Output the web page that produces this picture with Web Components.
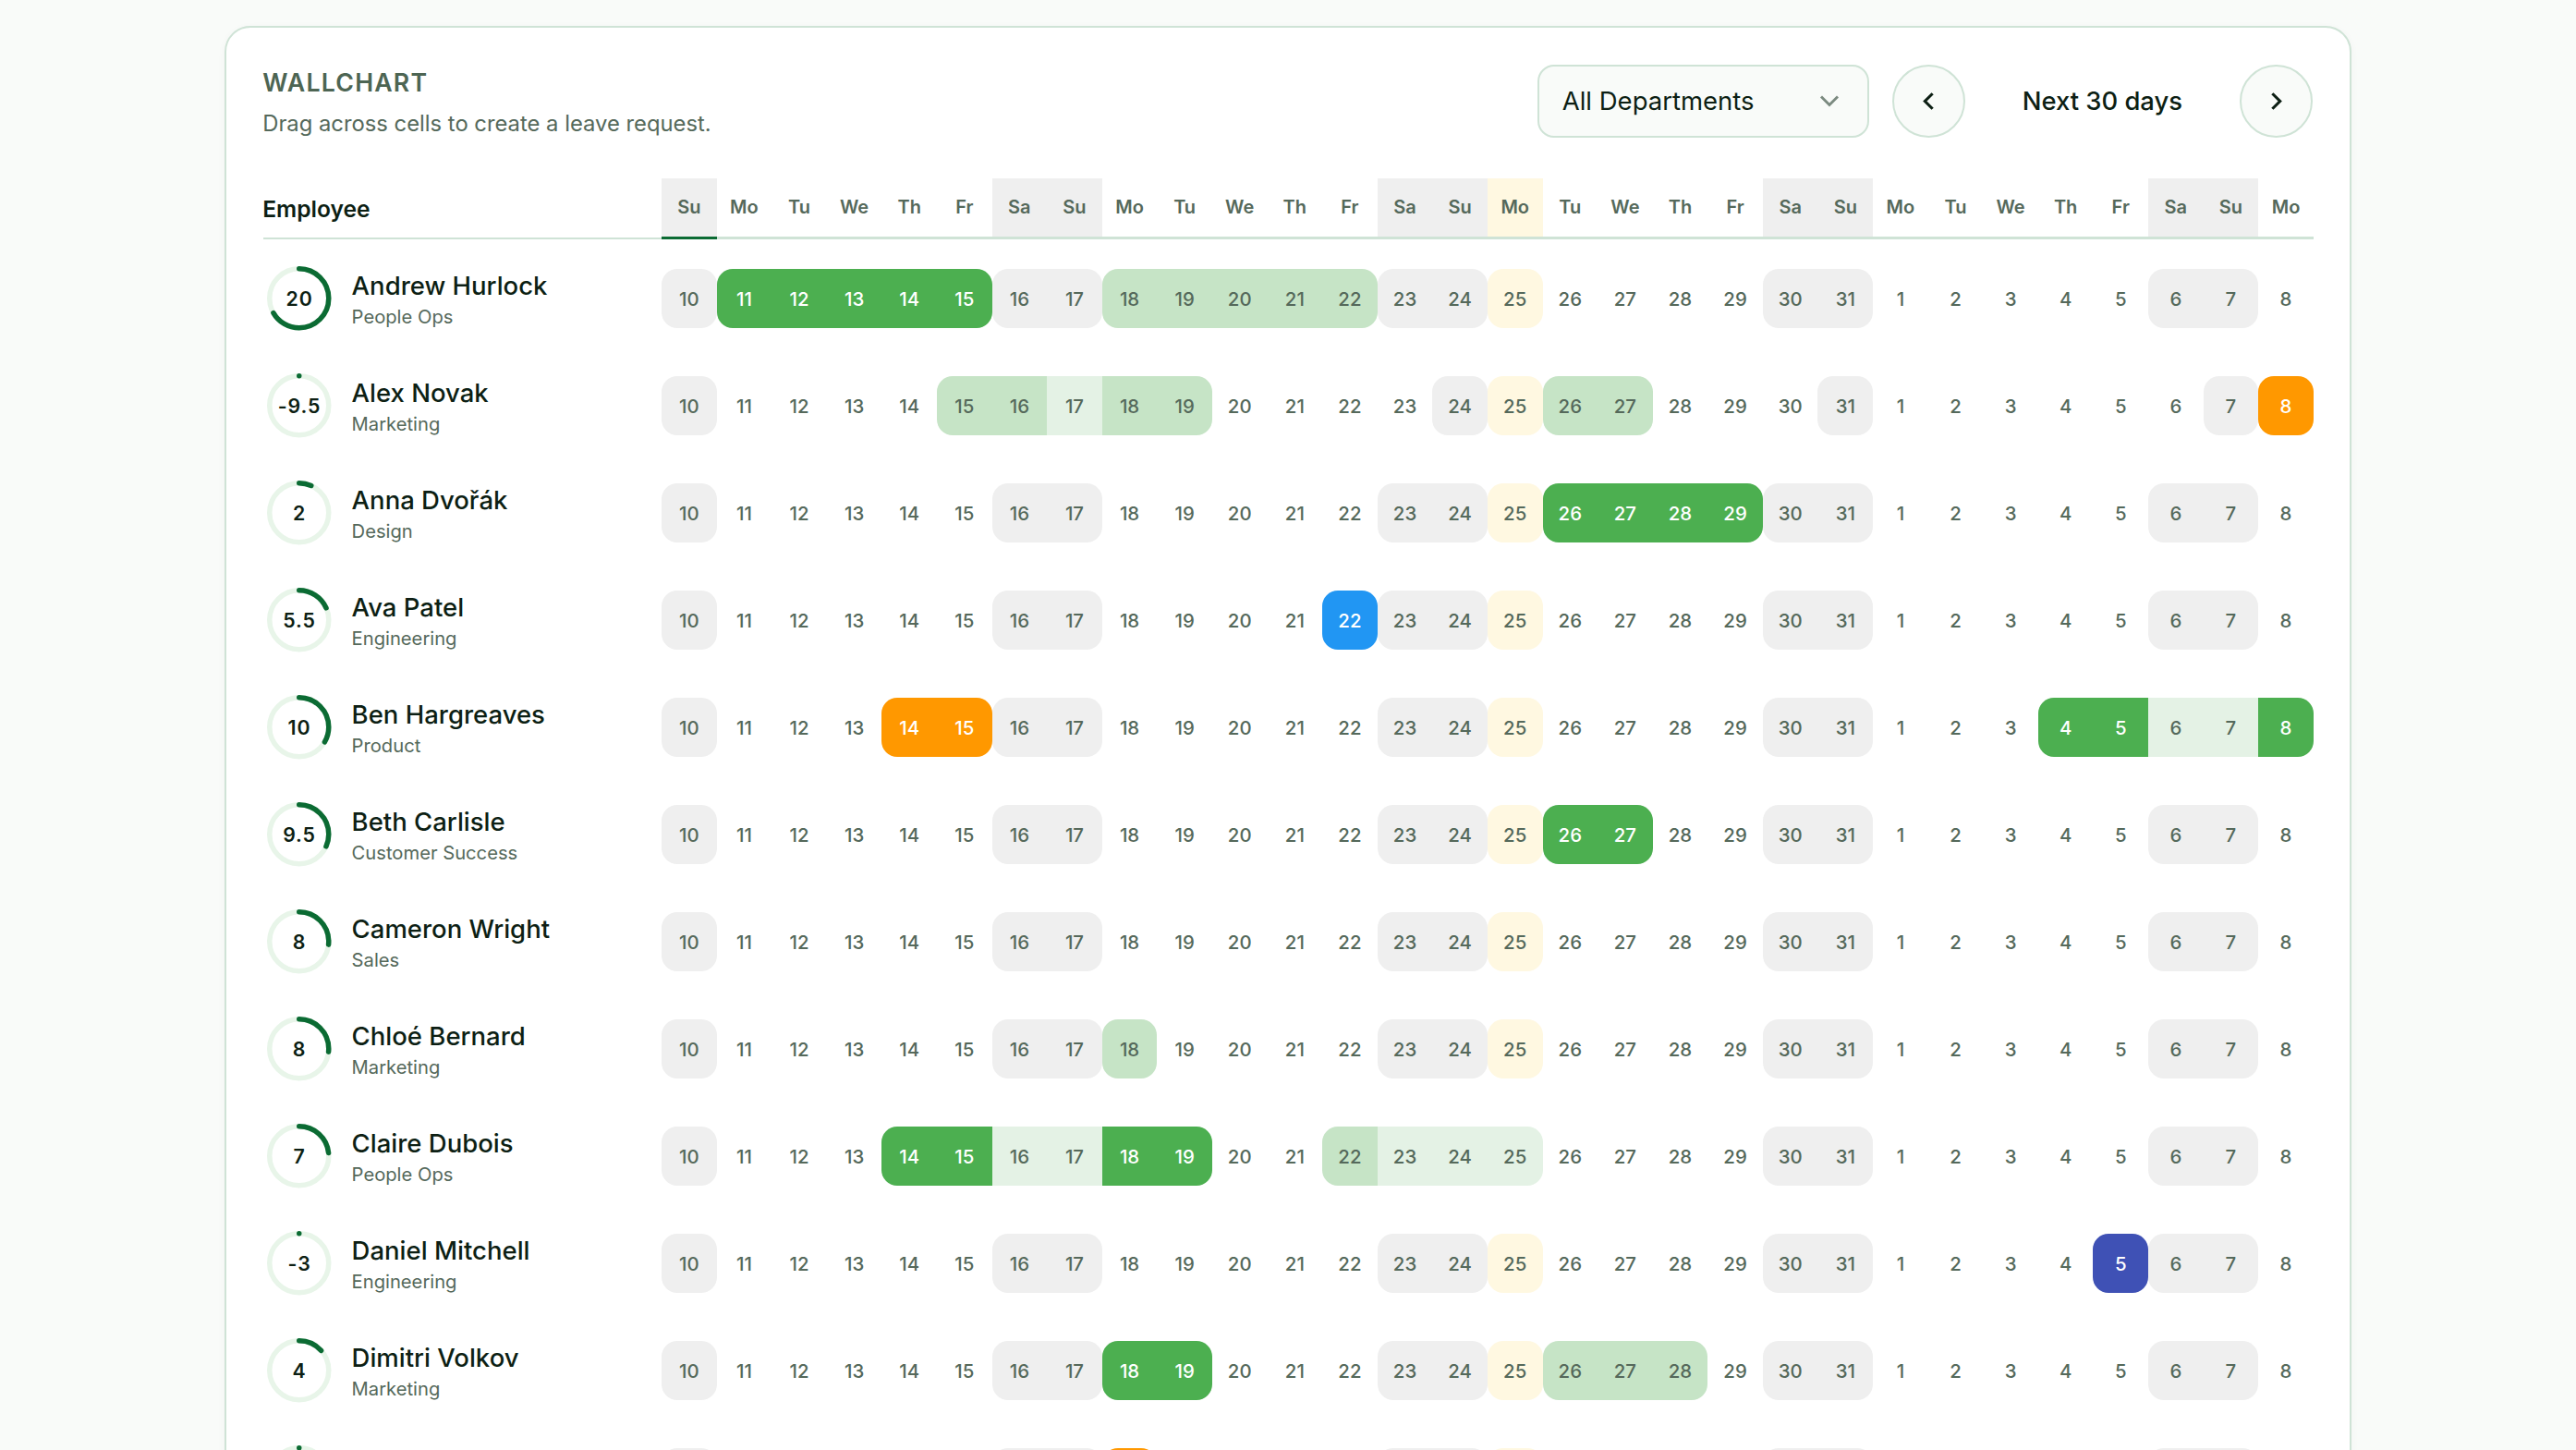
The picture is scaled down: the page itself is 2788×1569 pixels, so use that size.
<!DOCTYPE html>
<html lang="en">
<head>
<meta charset="utf-8">
<title>Wallchart</title>
<style>
  html, body { margin: 0; height: 1569px; overflow: hidden; background: #f9fbf9; }
  body { padding-top: 27.5px; box-sizing: border-box; font-family: Inter, "Noto Sans", sans-serif; color: #0d1f14; }
</style>
</head>
<body>
<wc-card title="WALLCHART" subtitle="Drag across cells to create a leave request.">
  <wc-select slot="controls" label="All Departments"></wc-select>
  <wc-range slot="controls" label="Next 30 days"></wc-range>
  <wc-head></wc-head>
  <wc-row name="Andrew Hurlock" dept="People Ops" balance="20" leaves="1-5:s 8-12:l"></wc-row>
  <wc-row name="Alex Novak" dept="Marketing" balance="-9.5" off="0 14 21 28" leaves="5-6:l,7:p,8-9:l 16-17:l 29:o"></wc-row>
  <wc-row name="Anna Dvořák" dept="Design" balance="2" leaves="16-19:s"></wc-row>
  <wc-row name="Ava Patel" dept="Engineering" balance="5.5" leaves="12:b"></wc-row>
  <wc-row name="Ben Hargreaves" dept="Product" balance="10" leaves="4-5:o 25-26:s,27-28:p,29:s"></wc-row>
  <wc-row name="Beth Carlisle" dept="Customer Success" balance="9.5" leaves="16-17:s"></wc-row>
  <wc-row name="Cameron Wright" dept="Sales" balance="8"></wc-row>
  <wc-row name="Chloé Bernard" dept="Marketing" balance="8" leaves="8:l"></wc-row>
  <wc-row name="Claire Dubois" dept="People Ops" balance="7" leaves="4-5:s,6-7:p,8-9:s 12:l,13-15:p"></wc-row>
  <wc-row name="Daniel Mitchell" dept="Engineering" balance="-3" leaves="26:i"></wc-row>
  <wc-row name="Dimitri Volkov" dept="Marketing" balance="4" leaves="8-9:s 16-18:l"></wc-row>
  <!-- only the top edge of this row is in frame, so it carries no text -->
  <wc-row balance="-1" leaves="8:o"></wc-row>
</wc-card>

<script>
const DAY_NAMES = ["Su", "Mo", "Tu", "We", "Th", "Fr", "Sa"];
const DAY_COUNT = 30;
const FIRST_DAY = 10;
const MONTH_LEN = 31;
const WEEKEND_COLS = [0, 6, 7, 13, 14, 20, 21, 27, 28];
const HOLIDAY_COL = 15;

const gridCols = `grid-template-columns: 431px repeat(${DAY_COUNT}, 59.6px);`;

// turn a list of column numbers into runs of neighbours
const toRuns = cols => {
  const runs = [];
  cols.forEach(c => {
    const last = runs[runs.length - 1];
    if (last && last[last.length - 1] === c - 1) last.push(c);
    else runs.push([c]);
  });
  return runs;
};

class WcCard extends HTMLElement {
  constructor() {
    super();
    this.attachShadow({ mode: "open" }).innerHTML = `
      <style>
        :host {
          display: block;
          box-sizing: border-box;
          width: 2302px;
          margin: 0 auto;
          padding: 40px 40px 0;
          background: #fff;
          border: 2px solid #cfe3d6;
          border-radius: 28px;
          box-shadow: 0 2px 8px rgba(20, 60, 30, 0.04);
        }
        header { display: flex; justify-content: space-between; align-items: flex-start; height: 79.4px; margin-bottom: 44px; }
        .intro { margin-left: -0.8px; }
        h1 { margin: 3.5px 0 0; font-size: 26.7px; line-height: 32px; font-weight: 600; letter-spacing: 1.2px; color: #4d6553; }
        p { margin: 13.5px 0 0; font-size: 23.8px; line-height: 30px; color: #55695b; }
        .controls { display: flex; align-items: center; gap: 24.5px; }
      </style>
      <header>
        <div class="intro">
          <h1>${this.getAttribute("title")}</h1>
          <p>${this.getAttribute("subtitle")}</p>
        </div>
        <div class="controls"><slot name="controls"></slot></div>
      </header>
      <slot></slot>
    `;
    this.removeAttribute("title");
  }
}

class WcSelect extends HTMLElement {
  constructor() {
    super();
    this.attachShadow({ mode: "open" }).innerHTML = `
      <style>
        :host {
          display: flex;
          align-items: center;
          justify-content: space-between;
          box-sizing: border-box;
          width: 359.5px;
          height: 79.4px;
          padding: 0 23px 0 25px;
          background: #f9fbf9;
          border: 2px solid #cfe3d6;
          border-radius: 18px;
          font-size: 27.5px;
          color: #0d1f14;
        }
        svg { display: block; width: 36px; height: 36px; fill: none; stroke: #7b8a80; stroke-width: 1.9; }
      </style>
      <span>${this.getAttribute("label")}</span>
      <svg viewBox="0 0 24 24"><polyline points="6 9 12 15 18 9"></polyline></svg>
    `;
  }
}

class WcRange extends HTMLElement {
  constructor() {
    super();
    this.attachShadow({ mode: "open" }).innerHTML = `
      <style>
        :host { display: flex; align-items: center; }
        button {
          display: flex;
          align-items: center;
          justify-content: center;
          box-sizing: border-box;
          width: 79.4px;
          height: 79.4px;
          padding: 0;
          background: #f9fbf9;
          border: 2px solid #cfe3d6;
          border-radius: 50%;
        }
        svg { display: block; width: 33px; height: 33px; fill: none; stroke: #0d1f14; stroke-width: 2.3; }
        span { width: 296.5px; text-align: center; font-size: 27.4px; font-weight: 500; color: #0d1f14; }
      </style>
      <button aria-label="Previous"><svg viewBox="0 0 24 24"><polyline points="15 18 9 12 15 6"></polyline></svg></button>
      <span>${this.getAttribute("label")}</span>
      <button aria-label="Next"><svg viewBox="0 0 24 24"><polyline points="9 18 15 12 9 6"></polyline></svg></button>
    `;
  }
}

class WcHead extends HTMLElement {
  constructor() {
    super();
    const days = Array.from({ length: DAY_COUNT }, (_, i) => {
      let cls = "";
      if (WEEKEND_COLS.includes(i)) cls = "off";
      if (i === HOLIDAY_COL) cls = "holiday";
      if (i === 0) cls += " today";
      return `<div class="day ${cls}">${DAY_NAMES[i % 7]}</div>`;
    }).join("");
    this.attachShadow({ mode: "open" }).innerHTML = `
      <style>
        :host { display: grid; ${gridCols} height: 66px; margin-bottom: 6.3px; }
        .who {
          display: flex;
          align-items: flex-end;
          box-sizing: border-box;
          padding-bottom: 16px;
          border-bottom: 2px solid #cfe3d6;
          height: 66px;
          font-size: 24.6px;
          line-height: 30px;
          font-weight: 600;
          color: #0d1f14;
          text-indent: -0.8px;
        }
        .day {
          display: flex;
          align-items: center;
          justify-content: center;
          border-bottom: 3.6px solid #cfe3d6;
          font-size: 20px;
          font-weight: 600;
          color: #55695b;
        }
        .off { background: #efefef; }
        .holiday { background: #fff8e1; }
        .today { border-bottom-color: #0b6b33; }
      </style>
      <div class="who">Employee</div>
      ${days}
    `;
  }
}

class WcRing extends HTMLElement {
  constructor() {
    super();
    const value = parseFloat(this.getAttribute("value"));
    const r = 32;
    const full = 2 * Math.PI * r;
    const dash = value > 0 ? (value / 30) * full : 0;
    this.attachShadow({ mode: "open" }).innerHTML = `
      <style>
        :host { display: block; position: relative; width: 69.5px; height: 69.5px; }
        svg { display: block; width: 69.5px; height: 69.5px; fill: none; stroke-width: 5.5; }
        .track { stroke: #e8f5e9; }
        .bar { stroke: #0b6b33; stroke-linecap: round; }
        span {
          position: absolute;
          inset: 0;
          display: flex;
          align-items: center;
          justify-content: center;
          font-size: 21.3px;
          font-weight: 600;
          letter-spacing: 0.9px;
          color: #0d1f14;
        }
      </style>
      <svg viewBox="0 0 69.5 69.5">
        <circle class="track" cx="34.75" cy="34.75" r="${r}"></circle>
        <circle class="bar" cx="34.75" cy="34.75" r="${r}" stroke-dasharray="${dash} ${full + 10}" transform="rotate(-90 34.75 34.75)"></circle>
      </svg>
      <span><slot></slot></span>
    `;
  }
}

class WcRow extends HTMLElement {
  constructor() {
    super();
    const off = this.hasAttribute("off") ? this.getAttribute("off").split(" ").map(Number) : WEEKEND_COLS;
    const fills = {};
    const corners = {};
    const mark = (cols, fill) => {
      cols.forEach(c => { fills[c] = fill; corners[c] = ""; });
    };
    const roundEnds = cols => {
      corners[cols[0]] += " first";
      corners[cols[cols.length - 1]] += " last";
    };
    // background days first, leave is painted over them
    toRuns(off).forEach(run => mark(run, "off"));
    mark([HOLIDAY_COL], "holiday");
    toRuns(off).forEach(roundEnds);
    roundEnds([HOLIDAY_COL]);
    (this.getAttribute("leaves") || "").split(" ").filter(Boolean).forEach(run => {
      const all = [];
      run.split(",").forEach(part => {
        const [range, fill] = part.split(":");
        const [from, to = from] = range.split("-").map(Number);
        const cols = [];
        for (let c = from; c <= to; c++) cols.push(c);
        mark(cols, fill);
        all.push(...cols);
      });
      roundEnds(all);
    });
    const balance = this.getAttribute("balance");
    const name = this.getAttribute("name");
    const cells = Array.from({ length: DAY_COUNT }, (_, i) => {
      const n = FIRST_DAY + i;
      const day = n > MONTH_LEN ? n - MONTH_LEN : n;
      return `<div class="cell ${fills[i] || ""} ${corners[i] || ""}">${name ? day : ""}</div>`;
    }).join("");
    this.attachShadow({ mode: "open" }).innerHTML = `
      <style>
        :host { display: grid; ${gridCols} align-items: center; height: 116px; }
        .who { display: flex; align-items: center; gap: 21.8px; padding-left: 4.3px; }
        .text { padding-top: 1.4px; }
        .name { font-size: 27.5px; line-height: 36px; font-weight: 500; color: #0d1f14; }
        .dept { margin-top: 2px; font-size: 20.2px; line-height: 28px; color: #55695b; }
        .cell {
          display: flex;
          align-items: center;
          justify-content: center;
          height: 64px;
          font-size: 20.4px;
          font-weight: 500;
          color: #55695b;
        }
        .first { border-top-left-radius: 17px; border-bottom-left-radius: 17px; }
        .last { border-top-right-radius: 17px; border-bottom-right-radius: 17px; }
        .off { background: #efefef; }
        .holiday { background: #fff8e1; }
        .l { background: #c6e4c6; }
        .p { background: #e4f2e5; }
        .s, .o, .b, .i { color: #fff; }
        .s { background: #4caf50; }
        .o { background: #ff9800; }
        .b { background: #2196f3; }
        .i { background: #3f51b5; }
      </style>
      <div class="who">
        <wc-ring value="${balance}">${name ? balance : ""}</wc-ring>
        <div class="text">
          <div class="name">${name || ""}</div>
          <div class="dept">${this.getAttribute("dept") || ""}</div>
        </div>
      </div>
      ${cells}
    `;
  }
}

customElements.define("wc-card", WcCard);
customElements.define("wc-select", WcSelect);
customElements.define("wc-range", WcRange);
customElements.define("wc-head", WcHead);
customElements.define("wc-ring", WcRing);
customElements.define("wc-row", WcRow);
</script>
</body>
</html>
